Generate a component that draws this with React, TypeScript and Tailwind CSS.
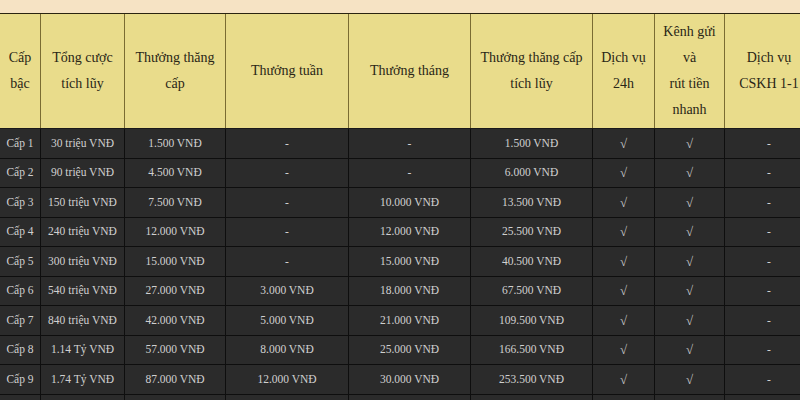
import React from "react";

const widths = ["w-[41px]", "w-[84px]", "w-[101px]", "w-[123px]", "w-[122px]", "w-[122px]", "w-[62px]", "w-[70px]", "w-[88px]"];

const headers: React.ReactNode[] = [
  <>Cấp<br />bậc</>,
  <>Tổng cược<br />tích lũy</>,
  <>Thưởng thăng<br />cấp</>,
  <>Thưởng tuần</>,
  <>Thưởng tháng</>,
  <>Thưởng thăng cấp<br />tích lũy</>,
  <>Dịch vụ<br />24h</>,
  <>Kênh gửi<br />và<br />rút tiền<br />nhanh</>,
  <>Dịch vụ<br />CSKH 1-1</>,
];

const rows: string[][] = [
  ["Cấp 1", "30 triệu VNĐ", "1.500 VNĐ", "-", "-", "1.500 VNĐ", "√", "√", "-"],
  ["Cấp 2", "90 triệu VNĐ", "4.500 VNĐ", "-", "-", "6.000 VNĐ", "√", "√", "-"],
  ["Cấp 3", "150 triệu VNĐ", "7.500 VNĐ", "-", "10.000 VNĐ", "13.500 VNĐ", "√", "√", "-"],
  ["Cấp 4", "240 triệu VNĐ", "12.000 VNĐ", "-", "12.000 VNĐ", "25.500 VNĐ", "√", "√", "-"],
  ["Cấp 5", "300 triệu VNĐ", "15.000 VNĐ", "-", "15.000 VNĐ", "40.500 VNĐ", "√", "√", "-"],
  ["Cấp 6", "540 triệu VNĐ", "27.000 VNĐ", "3.000 VNĐ", "18.000 VNĐ", "67.500 VNĐ", "√", "√", "-"],
  ["Cấp 7", "840 triệu VNĐ", "42.000 VNĐ", "5.000 VNĐ", "21.000 VNĐ", "109.500 VNĐ", "√", "√", "-"],
  ["Cấp 8", "1.14 Tỷ VNĐ", "57.000 VNĐ", "8.000 VNĐ", "25.000 VNĐ", "166.500 VNĐ", "√", "√", "-"],
  ["Cấp 9", "1.74 Tỷ VNĐ", "87.000 VNĐ", "12.000 VNĐ", "30.000 VNĐ", "253.500 VNĐ", "√", "√", "-"],
  ["", "", "", "", "", "", "", "", ""],
];

const rowHeights = ["h-[30px]", "h-[29px]", "h-[30px]", "h-[29px]", "h-[30px]", "h-[29px]", "h-[30px]", "h-[29px]", "h-[30px]", "h-[30px]"];

export default function App() {
  return (
    <div
      className="w-[800px] h-[400px] overflow-hidden bg-[#2b2b2b]"
      style={{ fontFamily: '"Liberation Serif", "Times New Roman", serif' }}
    >
      <div className="h-[13px] bg-[#f6e3c4]" />
      <div className="w-[813px] border-t border-[#2a2410]">
        <div className="flex h-[115px] bg-[#e9dc8b] border-b border-[#1a1a1a]">
          {headers.map((h, i) => (
            <div
              key={i}
              className={`${widths[i]} shrink-0 flex items-center justify-center text-center text-[14px] leading-[26px] text-[#2a2616] ${i < 8 ? "border-r border-[#7a6c32]" : ""}`}
            >
              <div>{h}</div>
            </div>
          ))}
        </div>
        {rows.map((r, ri) => (
          <div key={ri} className={`flex ${rowHeights[ri]} bg-[#2b2b2b] border-b border-[#0e0e0e]`}>
            {r.map((c, ci) => (
              <div
                key={ci}
                className={`${widths[ci]} shrink-0 flex items-center justify-center text-[11.5px] text-[#d0d0d0] whitespace-nowrap ${ci < 8 ? "border-r border-[#0e0e0e]" : ""}`}
              >
                {c === "√" ? <span className="text-[13px] text-[#c8c8c8]">√</span> : c}
              </div>
            ))}
          </div>
        ))}
      </div>
    </div>
  );
}
